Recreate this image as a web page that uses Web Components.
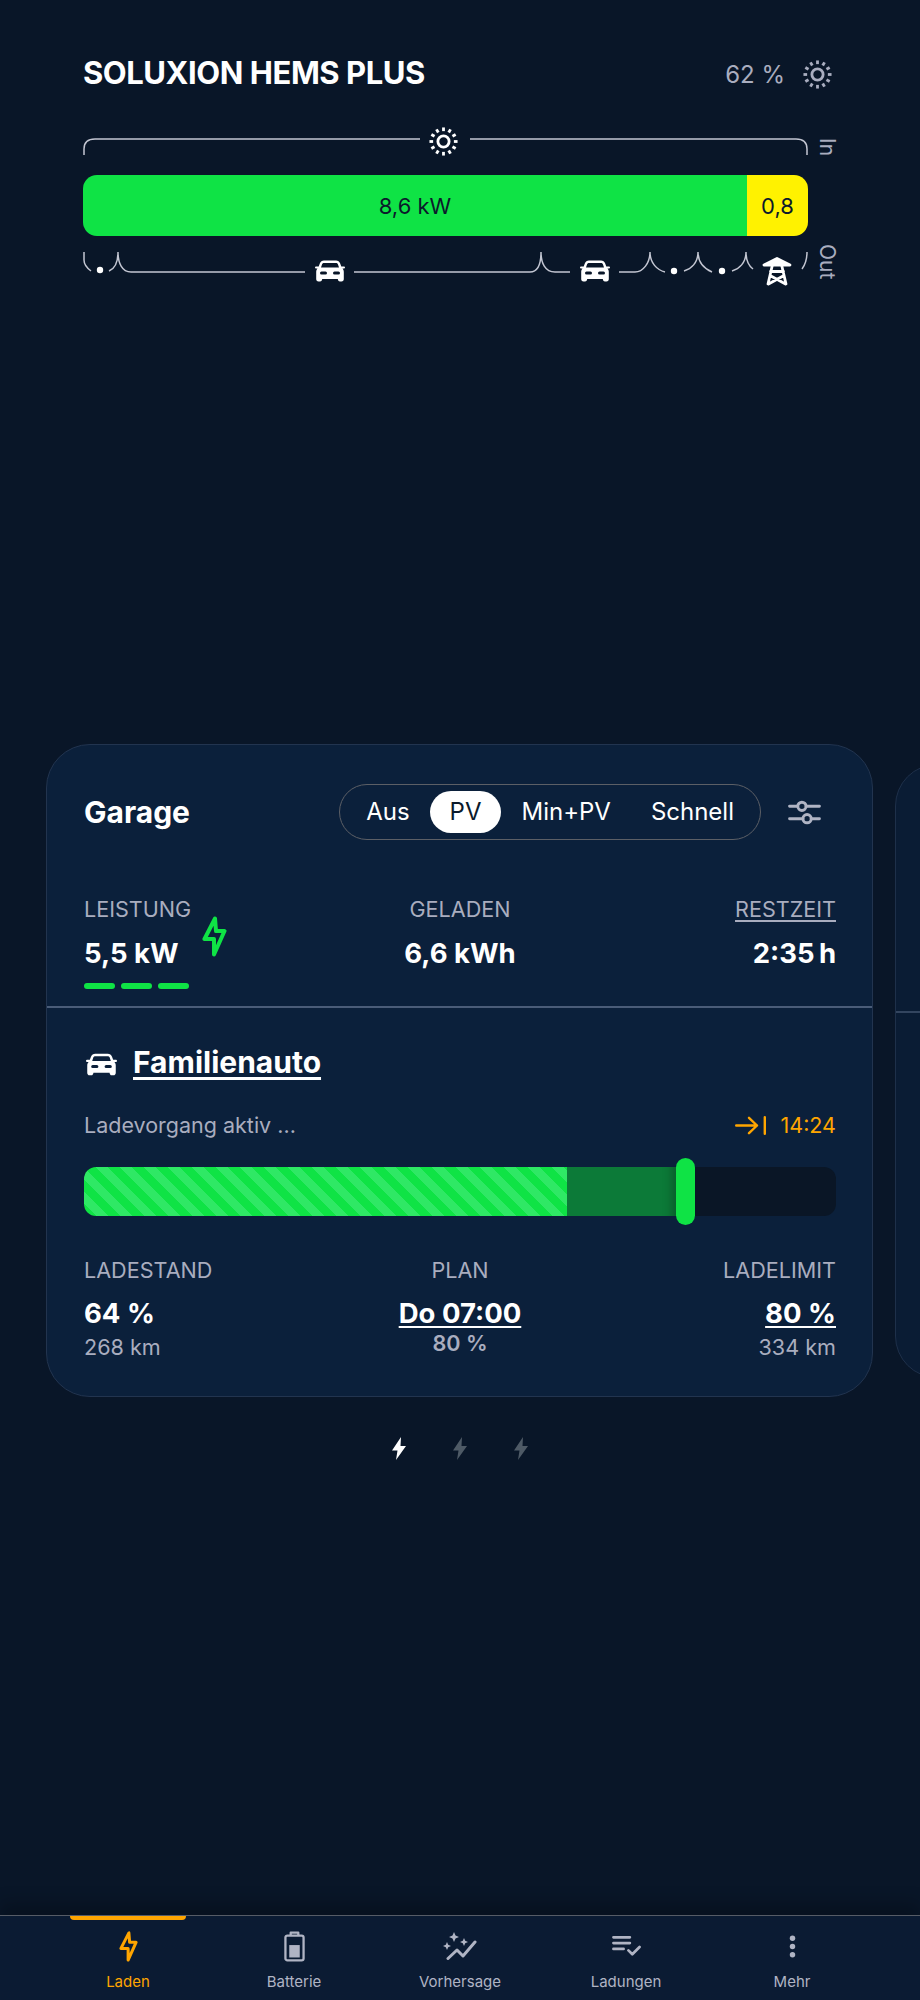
<!DOCTYPE html>
<html lang="de">
<head>
<meta charset="utf-8">
<title>SOLUXION HEMS PLUS</title>
<style>
  html, body { margin: 0; height: 100%; }
  body {
    background: #091628;
    color: #fff;
    font-family: Inter, "Liberation Sans", sans-serif;
    width: 920px;
    height: 2000px;
    overflow: hidden;
  }
</style>
</head>
<body>

<hems-app></hems-app>

<script>
const sunRays = Array.from({ length: 12 }, (_, i) => `<path d="M16 1.5v3.800" transform="rotate(${i * 30} 16 16)"/>`).join('');

const ICONS = {
  sun: `<svg viewBox="0 0 32 32" fill="none" stroke="currentColor" stroke-width="2.900"><circle cx="16" cy="16" r="5.800"/>${sunRays}</svg>`,
  car: `<svg viewBox="0 0 30 22" fill="currentColor"><path fill-rule="evenodd" d="M9 .5H21C23 .5 24.5 1.500 25.2 3.500L26.3 6.500H29A1 1 0 0 1 29 8.500H27.500C28.3 9.500 28.8 10.500 28.8 12V19C28.8 20.500 28 21.500 26.500 21.500H25C23.500 21.500 23 20.500 22.800 19H7.200C7 20.500 6.500 21.500 5 21.500H3.500C2 21.500 1.200 20.500 1.200 19V12C1.200 10.500 1.700 9.500 2.500 8.500H1A1 1 0 0 1 1 6.500H3.700L4.800 3.500C5.500 1.500 7 .5 9 .5ZM9 3C8 3 7.300 3.500 7 4.500L6 7.500H24L23 4.500C22.700 3.500 22 3 21 3ZM6.500 11.500H10.500A1.500 1.500 0 0 1 10.500 14.500H6.500A1.500 1.500 0 0 1 6.500 11.500ZM19.500 11.500H23.500A1.500 1.500 0 0 1 23.500 14.500H19.500A1.500 1.500 0 0 1 19.500 11.500Z"/></svg>`,
  tower: `<svg viewBox="0 0 30 30" fill="none" stroke="currentColor" stroke-width="2.800" stroke-linecap="round" stroke-linejoin="round"><path fill="currentColor" d="M15 2 2 8.500H28Z"/><path d="M10.500 8 6 27.500M19.500 8 24 27.500M8.500 15H21.500M8 19 23.500 27.500M22 19 6.500 27.500"/></svg>`,
  bolt: `<svg viewBox="0 0 25 41" fill="none" stroke="currentColor" stroke-width="4" stroke-linejoin="round" stroke-linecap="round"><path d="M13 2.500 2.500 23H12V38.500L22.500 15H14Z"/></svg>`,
  boltFill: `<svg viewBox="0 0 14 23" fill="currentColor"><path d="M9 0 0 13.500H5.500L4 23 14 9H8.500Z"/></svg>`,
  sliders: `<svg viewBox="0 0 32 26" fill="none" stroke="currentColor" stroke-width="2.800" stroke-linecap="round"><path d="M1.500 7H9.500M17.500 7H30.500M1.500 19H14.500M22.500 19H30.500"/><circle cx="13.500" cy="7" r="4"/><circle cx="18.500" cy="19" r="4"/></svg>`,
  arrowEnd: `<svg viewBox="0 0 31 19" fill="none" stroke="currentColor" stroke-width="2.400" stroke-linecap="round" stroke-linejoin="round"><path d="M1.200 9.500H22M14 1.800 22 9.500 14 17.200M29.800 1.200V17.800"/></svg>`,
  battery: `<svg viewBox="0 0 22 32" fill="none" stroke="currentColor" stroke-width="2.400" stroke-linejoin="round"><path d="M7 4.500V1.500H15V4.500"/><rect x="1.500" y="4.500" width="19" height="26" rx="2"/><rect x="5.500" y="14.500" width="11" height="13" fill="currentColor" stroke="none"/></svg>`,
  wand: `<svg viewBox="0 0 36 28" fill="currentColor"><path d="M12 0 13.500 3.500 17 5 13.500 6.500 12 10 10.500 6.500 7 5 10.500 3.500ZM22 6 23.200 8.800 26 10 23.200 11.200 22 14 20.800 11.200 18 10 20.800 8.800ZM5 10 6.200 12.800 9 14 6.200 15.200 5 18 3.800 15.200 1 14 3.800 12.800Z"/><path fill="none" stroke="currentColor" stroke-width="3" stroke-linecap="round" stroke-linejoin="round" d="M6 26.500 15 18 21 24 33 10"/></svg>`,
  list: `<svg viewBox="0 0 30 22" fill="none" stroke="currentColor" stroke-width="2.800" stroke-linecap="round" stroke-linejoin="round"><path d="M1.500 2H18.500M1.500 8H18.500M1.500 14H12M17 15.500 21 19.500 28.500 12"/></svg>`,
  dots: `<svg viewBox="0 0 8 26" fill="currentColor"><circle cx="4" cy="3.500" r="3.100"/><circle cx="4" cy="13" r="3.100"/><circle cx="4" cy="22.500" r="3.100"/></svg>`
};

const define = (name, css, html) => customElements.define(name, class extends HTMLElement {
  constructor() {
    super();
    this.attachShadow({ mode: 'open' });
  }
  connectedCallback() {
    const get = (k) => this.getAttribute(k) || '';
    this.shadowRoot.innerHTML = `<style>${css}</style>${html(get)}`;
  }
});

define('hems-icon', `
  :host { display: inline-flex; color: inherit; }
  svg { display: block; width: 100%; height: 100%; }
`, (a) => ICONS[a('name')]);

define('hems-header', `
  :host { display: flex; align-items: center; justify-content: space-between; height: 40px; color: #fff; }
  h1 { margin: 0; font-size: 31px; font-weight: 700; letter-spacing: -0.45px; line-height: 40px; }
  .sun { display: flex; align-items: center; gap: 17px; margin-top: 2px; color: #a9adbf; font-size: 24px; }
  hems-icon { width: 31px; height: 31px; }
`, () => `
  <h1>SOLUXION HEMS PLUS</h1>
  <div class="sun"><span>62 %</span><hems-icon name="sun"></hems-icon></div>
`);

define('energy-bar', `
  :host { display: flex; height: 61px; border-radius: 14px; overflow: hidden; color: #0b1a2b; font-size: 22px; }
  div { display: flex; align-items: center; justify-content: center; }
  .green { flex: 1; background: #0fe345; }
  .yellow { width: 61px; background: #fff200; }
`, () => `<div class="green">8,6 kW</div><div class="yellow">0,8</div>`);

define('energy-flow', `
  :host { display: grid; grid-template-columns: 725px 1fr; column-gap: 7px; }
  .canvas { position: relative; color: #fff; }
  .canvas svg.lines { position: absolute; left: 0; top: 0; width: 725px; fill: none; stroke: #c3c6d2; stroke-width: 1.500; }
  .canvas hems-icon { position: absolute; }
  .side { writing-mode: vertical-rl; color: #a9adbf; font-size: 21px; line-height: 24px; }
  .in { margin-top: 6px; height: 29px; }
  .out { margin-top: 8px; }
  energy-bar { grid-column: 1; margin: 5px 0 0; }
`, () => `
  <div class="canvas" style="height:38px">
    <svg class="lines" style="height:38px" viewBox="0 0 725 38">
      <path d="M1 23V17C1 10 5 7 12 7H337"/>
      <path d="M387 7H713C720 7 724 10 724 17V23"/>
    </svg>
    <hems-icon name="sun" style="left:345px;top:-6px;width:31px;height:31px"></hems-icon>
  </div>
  <div class="side in">In</div>
  <energy-bar></energy-bar>
  <div></div>
  <div class="canvas" style="height:48px">
    <svg class="lines" style="height:48px" viewBox="0 0 725 48">
      <path d="M1 16V24C1 29 4 32 8 35"/>
      <path d="M26 35C31 33 35 27 35 16C35 27 39 36 48 36H222"/>
      <path d="M271 36H447C455 36 458 27 458 16C458 27 462 36 472 36H487"/>
      <path d="M536 36H552C560 36 567 27 567 16C567 27 574 34 582 36"/>
      <path d="M601 35C608 33 615 27 615 16C615 27 622 33 629 36"/>
      <path d="M649 35C656 33 663 27 663 16C663 24 666 30 670 33"/>
      <path d="M724 16C724 23 722 29 719 33"/>
    </svg>
    <svg class="lines" style="height:48px;fill:#fff;stroke:none" viewBox="0 0 725 48">
      <circle cx="17" cy="34" r="3.200"/><circle cx="591" cy="35" r="3.200"/><circle cx="639" cy="35" r="3.200"/>
    </svg>
    <hems-icon name="car" style="left:232px;top:24px;width:30px;height:22px"></hems-icon>
    <hems-icon name="car" style="left:497px;top:24px;width:30px;height:22px"></hems-icon>
    <hems-icon name="tower" style="left:679px;top:20px;width:30px;height:31px"></hems-icon>
  </div>
  <div class="side out">Out</div>
`);

define('stat-block', `
  :host { display: flex; flex-direction: column; color: #fff; text-align: var(--align, left); }
  .label { color: #a9adbf; font-size: 21.600px; line-height: 28px; }
  .label.link { text-decoration: underline; text-underline-offset: 3px; text-decoration-thickness: 1.500px; }
  .value { font-size: 27.500px; font-weight: 700; line-height: 36px; margin-top: var(--value-gap, 12px); white-space: nowrap; }
  .value.link { text-decoration: underline; text-underline-offset: 3px; text-decoration-thickness: 2px; }
  .sub { color: #a9adbf; font-size: 21.600px; line-height: 28px; margin-top: 2px; }
  .sub.bold { font-weight: 600; margin-top: -2px; }
`, (a) => `
  <span class="label ${a('label-link') ? 'link' : ''}">${a('label')}</span>
  <span class="value ${a('value-link') ? 'link' : ''}">${a('value')}</span>
  ${a('sub') ? `<span class="sub ${a('sub-bold') ? 'bold' : ''}">${a('sub')}</span>` : ''}
`);

define('mode-switch', `
  :host { display: inline-flex; align-items: center; height: 54px; padding: 0 6px; border: 1.500px solid #5c5f66; border-radius: 28px; font-size: 24px; color: #fff; }
  span { height: 42px; line-height: 42px; padding: 0 20px; border-radius: 21px; }
  .on { background: #fff; color: #0b1a2b; }
`, () => `<span>Aus</span><span class="on">PV</span><span>Min+PV</span><span>Schnell</span>`);

define('charge-bar', `
  :host { display: block; position: relative; height: 49px; }
  .track { display: flex; height: 49px; background: #0a1626; border-radius: 12px; overflow: hidden; }
  .done { width: 483px; background: repeating-linear-gradient(45deg, #0fe345 0 8.500px, #2fe865 8.500px 17px); }
  .plan { width: 109px; background: #0c7a38; box-shadow: inset -14px 0 10px -10px rgba(0, 0, 0, .25); }
  .thumb { position: absolute; left: 592px; top: -9px; width: 19px; height: 67px; border-radius: 10px; background: #0fe345; }
`, () => `<div class="track"><div class="done"></div><div class="plan"></div></div><div class="thumb"></div>`);

define('charge-card', `
  :host { display: block; flex: none; box-sizing: border-box; width: 827px; height: 653px; background: #0b203b; border: 1px solid #22344f; border-radius: 44px; color: #fff; }
  .top { padding: 39px 36px 0 37px; box-sizing: border-box; height: 263px; border-bottom: 2px solid #4a5c78; }
  .head { display: flex; align-items: center; justify-content: space-between; height: 56px; }
  h2 { margin: 0; font-size: 30px; font-weight: 700; }
  .controls { display: flex; align-items: center; gap: 27px; margin-right: 15px; }
  .controls hems-icon { width: 33px; height: 27px; color: #b0b4c4; }
  .stats { display: grid; grid-template-columns: 1fr 1fr 1fr; margin-top: 55px; }
  .power { position: relative; justify-self: start; }
  .power hems-icon { position: absolute; left: 118px; top: 21px; width: 25px; height: 41px; color: #0fe345; }
  .bars { display: flex; gap: 6px; margin-top: 12px; }
  .bars i { width: 31px; height: 6px; border-radius: 3px; background: #0fe345; }
  .mid { --align: center; }
  .end { --align: right; }
  .bottom { padding: 0 36px 0 37px; }
  .vehicle { display: flex; align-items: center; gap: 16px; margin-top: 34px; height: 40px; }
  .vehicle hems-icon { width: 31px; height: 23px; margin-left: 2px; margin-top: 4px; }
  .vehicle a { font-size: 30px; font-weight: 700; line-height: 40px; color: #fff; text-decoration: underline; text-decoration-thickness: 3px; text-underline-offset: 4px; }
  .status { display: flex; align-items: center; justify-content: space-between; margin-top: 28px; height: 30px; font-size: 21.500px; color: #a9adbf; }
  .eta { display: flex; align-items: center; gap: 15px; color: #ffa500; }
  .eta hems-icon { width: 31px; height: 19px; }
  charge-bar { margin-top: 27px; }
  .stats.low { margin-top: 40px; --value-gap: 11px; }
`, () => `
  <div class="top">
    <div class="head">
      <h2>Garage</h2>
      <div class="controls"><mode-switch></mode-switch><hems-icon name="sliders"></hems-icon></div>
    </div>
    <div class="stats">
      <div class="power">
        <stat-block label="LEISTUNG" value="5,5 kW"></stat-block>
        <hems-icon name="bolt"></hems-icon>
        <div class="bars"><i></i><i></i><i></i></div>
      </div>
      <stat-block class="mid" label="GELADEN" value="6,6 kWh"></stat-block>
      <stat-block class="end" label="RESTZEIT" label-link="1" value="2:35&#8201;h"></stat-block>
    </div>
  </div>
  <div class="bottom">
    <div class="vehicle"><hems-icon name="car"></hems-icon><a>Familienauto</a></div>
    <div class="status"><span>Ladevorgang aktiv ...</span><span class="eta"><hems-icon name="arrowEnd"></hems-icon>14:24</span></div>
    <charge-bar></charge-bar>
    <div class="stats low">
      <stat-block label="LADESTAND" value="64 %" sub="268 km"></stat-block>
      <stat-block class="mid" label="PLAN" value="Do 07:00" value-link="1" sub="80 %" sub-bold="1"></stat-block>
      <stat-block class="end" label="LADELIMIT" value="80 %" value-link="1" sub="334 km"></stat-block>
    </div>
  </div>
`);

define('card-carousel', `
  :host { display: block; height: 653px; overflow: hidden; }
  .row { display: flex; gap: 22px; padding-left: 46px; align-items: center; height: 653px; }
  .next { flex: none; box-sizing: border-box; width: 800px; height: 614px; background: #0a1c34; border: 1px solid #1e304a; border-radius: 42px; }
  .next i { display: block; margin-top: 246px; height: 2px; background: #33455f; }
`, () => `<div class="row"><charge-card></charge-card><div class="next"><i></i></div></div>`);

define('page-dots', `
  :host { display: flex; justify-content: center; gap: 47px; color: #4e5a66; }
  hems-icon { width: 14px; height: 23px; }
  .on { color: #fff; }
`, () => `<hems-icon class="on" name="boltFill"></hems-icon><hems-icon name="boltFill"></hems-icon><hems-icon name="boltFill"></hems-icon>`);

define('nav-item', `
  :host { display: flex; flex-direction: column; align-items: center; position: relative; width: 166px; color: #b0b4c4; font-size: 15px; }
  :host([active]) { color: #ffa500; }
  :host([active])::before { content: ''; position: absolute; left: 25px; right: 25px; top: 0; height: 4px; background: #ffa500; border-radius: 0 0 4px 4px; }
  .ico { height: 32px; margin-top: 14px; display: flex; align-items: center; }
  span { margin-top: 8px; line-height: 24px; }
`, (a) => `<div class="ico"><hems-icon name="${a('icon')}" style="width:${a('w')}px;height:${a('h')}px"></hems-icon></div><span>${a('label')}</span>`);

define('bottom-nav', `
  :host { display: flex; justify-content: center; height: 84px; background: #0b1b33; border-top: 1.500px solid #565c66; box-shadow: 0 -12px 16px rgba(0, 0, 0, .22); }
`, () => `
  <nav-item active icon="bolt" label="Laden" w="19" h="31"></nav-item>
  <nav-item icon="battery" label="Batterie" w="21" h="31"></nav-item>
  <nav-item icon="wand" label="Vorhersage" w="36" h="28"></nav-item>
  <nav-item icon="list" label="Ladungen" w="29" h="22"></nav-item>
  <nav-item icon="dots" label="Mehr" w="7" h="25"></nav-item>
`);

define('hems-app', `
  :host { display: flex; flex-direction: column; height: 2000px; }
  main { flex: 1; display: flex; flex-direction: column; }
  .summary { padding: 53px 83px 0; width: 754px; }
  hems-header { width: 750px; }
  energy-flow { margin-top: 39px; }
  .gap { height: 460px; }
  page-dots { margin-top: 40px; }
`, () => `
  <main>
    <div class="summary">
      <hems-header></hems-header>
      <energy-flow></energy-flow>
    </div>
    <div class="gap"></div>
    <card-carousel></card-carousel>
    <page-dots></page-dots>
  </main>
  <bottom-nav></bottom-nav>
`);
</script>
</body>
</html>
